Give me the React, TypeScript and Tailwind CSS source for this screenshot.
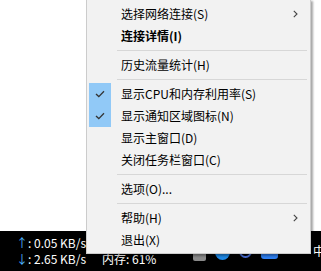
import React from 'react';

type Item =
  | { kind: 'sep' }
  | { kind: 'item'; label: string; bold?: boolean; checked?: boolean; sub?: boolean };

const items: Item[] = [
  { kind: 'item', label: '选择网络连接(S)', sub: true },
  { kind: 'item', label: '连接详情(I)', bold: true },
  { kind: 'sep' },
  { kind: 'item', label: '历史流量统计(H)' },
  { kind: 'sep' },
  { kind: 'item', label: '显示CPU和内存利用率(S)', checked: true },
  { kind: 'item', label: '显示通知区域图标(N)', checked: true },
  { kind: 'item', label: '显示主窗口(D)' },
  { kind: 'item', label: '关闭任务栏窗口(C)' },
  { kind: 'sep' },
  { kind: 'item', label: '选项(O)...' },
  { kind: 'sep' },
  { kind: 'item', label: '帮助(H)', sub: true },
  { kind: 'item', label: '退出(X)' },
];

const font = { fontFamily: '"Noto Sans CJK SC", "Noto Sans", sans-serif' };

const Check = () => (
  <svg width="10" height="8" viewBox="0 0 10 8">
    <path d="M1 4 L3.8 6.6 L9 1.2" fill="none" stroke="#333" strokeWidth="1.3" />
  </svg>
);

const Chevron = () => (
  <svg width="5" height="8" viewBox="0 0 5 8">
    <path d="M0.8 0.8 L4 4 L0.8 7.2" fill="none" stroke="#444" strokeWidth="1.1" />
  </svg>
);

const ContextMenu = () => (
  <div
    className="absolute left-[86px] top-[-1px] w-[225px] bg-[#f2f2f2] border border-[#cccccc] pt-[3px] pb-[2px] shadow-[2px_2px_2px_rgba(0,0,0,0.35)]"
    style={font}
  >
    {items.map((it, i) =>
      it.kind === 'sep' ? (
        <div key={i} className="h-[7px] flex items-center pl-[30px] pr-[3px]">
          <div className="h-px w-full bg-[#d7d7d7]" />
        </div>
      ) : (
        <div key={i} className="h-[22px] flex items-center text-[12px] text-black">
          <div
            className={`ml-[2px] w-[22px] h-[22px] flex items-center justify-center ${
              it.checked ? 'bg-[#91c9f7]' : ''
            }`}
          >
            {it.checked && <Check />}
          </div>
          <span className={`ml-[10px] flex-1 leading-none ${it.bold ? 'font-bold' : ''}`}>{it.label}</span>
          {it.sub && (
            <span className="mr-[12px] flex items-center">
              <Chevron />
            </span>
          )}
        </div>
      )
    )}
  </div>
);

export default function App() {
  return (
    <div className="relative w-[321px] h-[271px] overflow-hidden bg-white flex flex-col" style={font}>
      <div className="flex-1 bg-white" />
      <div className="h-[40px] bg-black flex text-white text-[12px] leading-[16px] pt-[4px]">
        <div className="ml-[16px] w-[86px] flex flex-col">
          <span>
            <span className="text-[#4cb4ff]">↑</span>: 0.05 KB/s
          </span>
          <span>
            <span className="text-[#4cb4ff]">↓</span>: 2.65 KB/s
          </span>
        </div>
        <div className="w-[56px] flex flex-col">
          <span className="h-[16px]" />
          <span>内存: 61%</span>
        </div>
        <div className="ml-[35px] mt-[10px] flex items-start gap-[9px] h-[16px]">
          <div className="w-[13px] h-[16px] rounded-[2px] bg-[#8a8a8a]" />
          <div className="w-[15px] h-[15px] rounded-full bg-[#1e88e5]" />
          <div className="w-[13px] h-[13px] rounded-full border-2 border-[#4a6fd8]" />
          <div className="w-[17px] h-[14px] rounded-[3px] bg-[#2f7ff0]" />
          <div className="ml-[6px] w-[4px] h-[8px] bg-[#9a9a9a]" />
        </div>
        <span className="ml-auto mr-[-4px] mt-[8px] text-[12px]">中</span>
      </div>
      <ContextMenu />
    </div>
  );
}
